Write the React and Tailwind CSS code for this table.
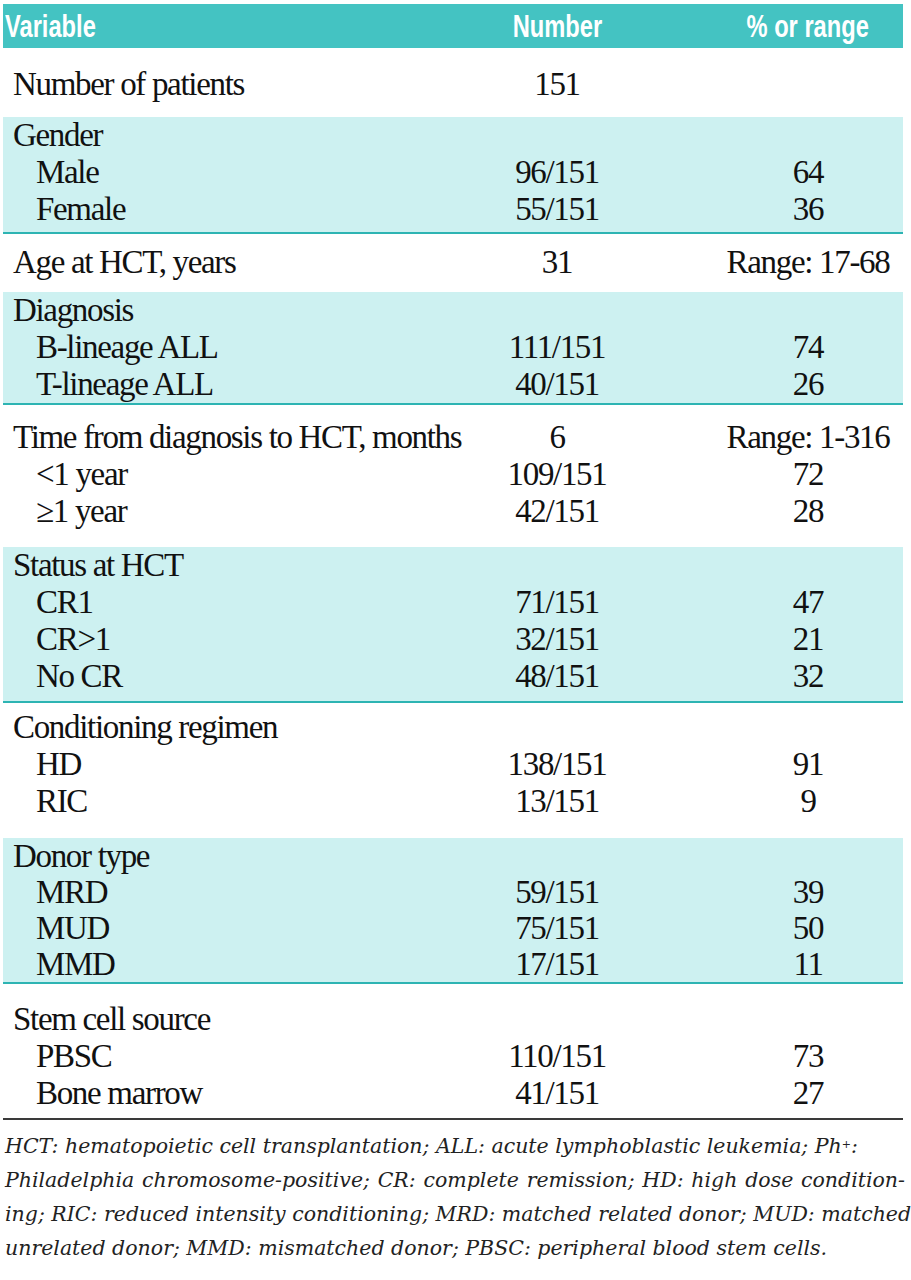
const sections = [
  { shade: false, pt: 'pt-[18px]', pb: 'pb-[14px]', rows: [['Number of patients', '151', '']] },
  {
    shade: true,
    pt: 'pt-0',
    pb: 'pb-[4px]',
    rows: [['Gender'], ['Male', '96/151', '64', true], ['Female', '55/151', '36', true]],
  },
  { shade: false, pt: 'pt-[10px]', pb: 'pb-[11px]', rows: [['Age at HCT, years', '31', 'Range: 17-68']] },
  {
    shade: true,
    pt: 'pt-0',
    pb: 'pb-0',
    rows: [['Diagnosis'], ['B-lineage ALL', '111/151', '74', true], ['T-lineage ALL', '40/151', '26', true]],
  },
  {
    shade: false,
    pt: 'pt-[14px]',
    pb: 'pb-[17px]',
    rows: [
      ['Time from diagnosis to HCT, months', '6', 'Range: 1-316'],
      ['<1 year', '109/151', '72', true],
      ['≥1 year', '42/151', '28', true],
    ],
  },
  {
    shade: true,
    pt: 'pt-0',
    pb: 'pb-[6px]',
    rows: [
      ['Status at HCT'],
      ['CR1', '71/151', '47', true],
      ['CR>1', '32/151', '21', true],
      ['No CR', '48/151', '32', true],
    ],
  },
  {
    shade: false,
    pt: 'pt-[6px]',
    pb: 'pb-[18px]',
    rows: [['Conditioning regimen'], ['HD', '138/151', '91', true], ['RIC', '13/151', '9', true]],
  },
  {
    shade: true,
    pt: 'pt-0',
    pb: 'pb-0',
    tight: true,
    rows: [
      ['Donor type'],
      ['MRD', '59/151', '39', true],
      ['MUD', '75/151', '50', true],
      ['MMD', '17/151', '11', true],
    ],
  },
  {
    shade: false,
    pt: 'pt-[17px]',
    pb: 'pb-[6px]',
    rows: [['Stem cell source'], ['PBSC', '110/151', '73', true], ['Bone marrow', '41/151', '27', true]],
  },
]

const serif = "font-['Liberation_Serif','Times_New_Roman',serif]"

function Row({ label, number, pct, sub, tight }) {
  return (
    <div
      className={`grid grid-cols-[464px_180px_1fr] items-center whitespace-nowrap ${
        tight ? 'h-[36px]' : 'h-[37px]'
      }`}
    >
      <div className={sub ? 'pl-[33px]' : 'pl-[10px]'}>{label}</div>
      <div className="text-center">{number}</div>
      <div className="pl-[66px] text-center">{pct}</div>
    </div>
  )
}

export default function App() {
  return (
    <div className="min-h-screen bg-white pt-[4px] text-[#111]">
      <div className="ml-[3px] w-[900px]">
        <div className="grid h-[44px] grid-cols-[464px_180px_1fr] items-center whitespace-nowrap bg-[#44c3c2] font-['Liberation_Sans',Arial,sans-serif] text-[32px] font-bold leading-none text-white">
          <div className="pl-[2px]">
            <span className="inline-block origin-left scale-x-[0.74]">Variable</span>
          </div>
          <div className="text-center">
            <span className="inline-block scale-x-[0.74]">Number</span>
          </div>
          <div className="pl-[66px] text-center">
            <span className="inline-block scale-x-[0.74]">% or range</span>
          </div>
        </div>

        <div className={`${serif} text-[33px] leading-none tracking-[-0.04em]`}>
          {sections.map((section, i) => (
            <div
              key={i}
              className={`${section.pt} ${section.pb} ${
                section.shade ? 'border-b-2 border-[#2db4b3] bg-[#cdf1f1]' : ''
              }`}
            >
              {section.rows.map((r, j) => (
                <Row
                  key={j}
                  label={r[0]}
                  number={r[1] || ''}
                  pct={r[2] || ''}
                  sub={r[3]}
                  tight={section.tight}
                />
              ))}
            </div>
          ))}
        </div>

        <div className="h-[2px] bg-[#3a3a3a]" />
      </div>

      <div className="ml-[5px] mt-[9px] w-[900px] font-['DejaVu_Serif',serif] text-[20.5px] italic leading-[34px] text-[#222]">
        <div className="whitespace-nowrap">
          HCT: hematopoietic cell transplantation; ALL: acute lymphoblastic leukemia; Ph<sup className="text-[11px]">+</sup>:
        </div>
        <div className="whitespace-nowrap text-justify [text-align-last:justify]">
          Philadelphia chromosome-positive; CR: complete remission; HD: high dose condition-
        </div>
        <div className="whitespace-nowrap text-justify [text-align-last:justify]">
          ing; RIC: reduced intensity conditioning; MRD: matched related donor; MUD: matched
        </div>
        <div className="whitespace-nowrap">
          unrelated donor; MMD: mismatched donor; PBSC: peripheral blood stem cells.
        </div>
      </div>
    </div>
  )
}
